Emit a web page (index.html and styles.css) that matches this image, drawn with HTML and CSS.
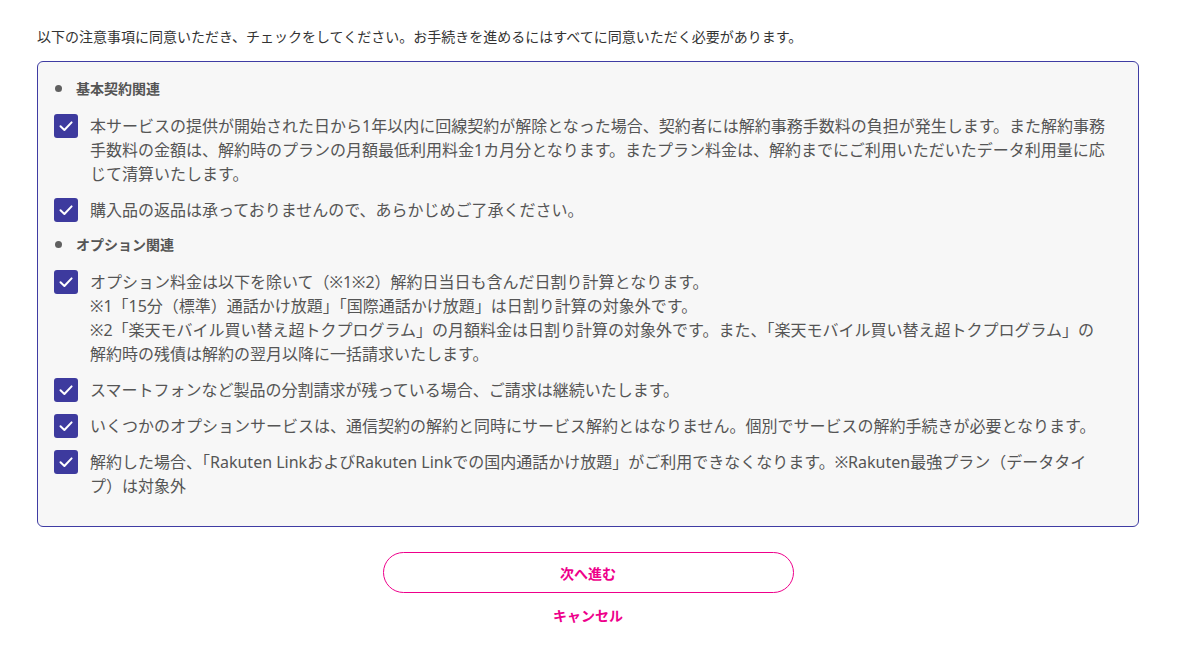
FILE: index.html
```html
<!DOCTYPE html>
<html lang="ja">
<head>
<meta charset="utf-8">
<title>注意事項</title>
<link rel="stylesheet" href="styles.css">
</head>
<body>
<div class="page">
  <p class="intro">以下の注意事項に同意いただき、チェックをしてください。お手続きを進めるにはすべてに同意いただく必要があります。</p>
  <div class="box">
    <div class="heading"><span class="dot"></span>基本契約関連</div>
    <div class="item">
      <span class="check"><svg viewBox="0 0 24 24" width="24" height="24"><path d="M6.5 12.3 L10.4 16 L17.6 8.4" fill="none" stroke="#fff" stroke-width="2" stroke-linecap="round" stroke-linejoin="round"/></svg></span>
      <p class="text">本サービスの提供が開始された日から1年以内に回線契約が解除となった場合、契約者には解約事務手数料の負担が発生します。また解約事務手数料の金額は、解約時のプランの月額最低利用料金1カ月分となります。またプラン料金は、解約までにご利用いただいたデータ利用量に応じて清算いたします。</p>
    </div>
    <div class="item">
      <span class="check"><svg viewBox="0 0 24 24" width="24" height="24"><path d="M6.5 12.3 L10.4 16 L17.6 8.4" fill="none" stroke="#fff" stroke-width="2" stroke-linecap="round" stroke-linejoin="round"/></svg></span>
      <p class="text">購入品の返品は承っておりませんので、あらかじめご了承ください。</p>
    </div>
    <div class="heading"><span class="dot"></span>オプション関連</div>
    <div class="item">
      <span class="check"><svg viewBox="0 0 24 24" width="24" height="24"><path d="M6.5 12.3 L10.4 16 L17.6 8.4" fill="none" stroke="#fff" stroke-width="2" stroke-linecap="round" stroke-linejoin="round"/></svg></span>
      <p class="text">オプション料金は以下を除いて（※1※2）解約日当日も含んだ日割り計算となります。<br>※1「15分（標準）通話かけ放題」「国際通話かけ放題」は日割り計算の対象外です。<br>※2「楽天モバイル買い替え超トクプログラム」の月額料金は日割り計算の対象外です。また、「楽天モバイル買い替え超トクプログラム」の解約時の残債は解約の翌月以降に一括請求いたします。</p>
    </div>
    <div class="item">
      <span class="check"><svg viewBox="0 0 24 24" width="24" height="24"><path d="M6.5 12.3 L10.4 16 L17.6 8.4" fill="none" stroke="#fff" stroke-width="2" stroke-linecap="round" stroke-linejoin="round"/></svg></span>
      <p class="text">スマートフォンなど製品の分割請求が残っている場合、ご請求は継続いたします。</p>
    </div>
    <div class="item">
      <span class="check"><svg viewBox="0 0 24 24" width="24" height="24"><path d="M6.5 12.3 L10.4 16 L17.6 8.4" fill="none" stroke="#fff" stroke-width="2" stroke-linecap="round" stroke-linejoin="round"/></svg></span>
      <p class="text">いくつかのオプションサービスは、通信契約の解約と同時にサービス解約とはなりません。個別でサービスの解約手続きが必要となります。</p>
    </div>
    <div class="item">
      <span class="check"><svg viewBox="0 0 24 24" width="24" height="24"><path d="M6.5 12.3 L10.4 16 L17.6 8.4" fill="none" stroke="#fff" stroke-width="2" stroke-linecap="round" stroke-linejoin="round"/></svg></span>
      <p class="text">解約した場合、「Rakuten LinkおよびRakuten Linkでの国内通話かけ放題」がご利用できなくなります。※Rakuten最強プラン（データタイプ）は対象外</p>
    </div>
  </div>
  <div class="actions">
    <button class="next" type="button">次へ進む</button>
    <a class="cancel" href="#">キャンセル</a>
  </div>
</div>
</body>
</html>
```
FILE: styles.css
```css
* { box-sizing: border-box; }
html, body { margin: 0; padding: 0; background: #fff; }
body {
  font-family: "Noto Sans", "Noto Sans CJK JP", sans-serif;
  color: #333;
}
.page {
  width: 1102px;
  margin-left: 37px;
  padding-top: 26px;
}
.intro {
  margin: 0 0 14px;
  font-size: 14px;
  line-height: 21px;
  color: #333;
}
.box {
  background: #f7f7f7;
  border: 1px solid #3f3ca3;
  border-radius: 6px;
  padding: 16px 30px 16px 16px;
}
.heading {
  display: flex;
  align-items: center;
  font-size: 14px;
  line-height: 21px;
  font-weight: 700;
  color: #555;
  margin-bottom: 15px;
}
.dot {
  width: 7px;
  height: 7px;
  border-radius: 50%;
  background: #606060;
  margin-left: 1px;
  margin-right: 14px;
}
.item {
  display: flex;
  align-items: flex-start;
  gap: 12px;
  margin-bottom: 12px;
}
.check {
  flex: 0 0 24px;
  width: 24px;
  height: 24px;
  border-radius: 3px;
  background: #3d3a9e;
  display: flex;
}
.text {
  margin: 0;
  flex: 1;
  font-size: 16px;
  line-height: 24px;
  color: #555;
}
.actions {
  display: flex;
  flex-direction: column;
  align-items: center;
  padding-top: 25px;
}
.next {
  width: 411px;
  height: 41px;
  border: 1px solid #ee008b;
  border-radius: 21px;
  background: #fff;
  color: #ee008b;
  font-family: inherit;
  font-size: 14px;
  font-weight: 700;
  cursor: pointer;
}
.cancel {
  margin-top: 12px;
  font-size: 14px;
  line-height: 21px;
  font-weight: 700;
  color: #ee008b;
  text-decoration: none;
}
```
